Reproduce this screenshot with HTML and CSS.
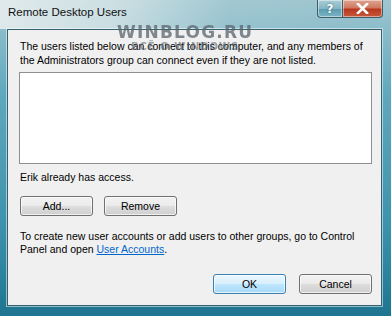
FILE: index.html
```html
<!DOCTYPE html>
<html lang="en">
<head>
    <meta charset="UTF-8">
    <title>Remote Desktop Users</title>
    <link rel="stylesheet" href="styles.css">
</head>
<body>

<div class="window">
    <div class="title-bar">
        <span class="title">Remote Desktop Users</span>
        <div class="caption-buttons">
            <button class="cap-btn help-btn">?</button>
            <button class="cap-btn close-btn">
                <svg width="13" height="11" viewBox="0 0 13 11">
                    <path d="M2 1 L11 10 M11 1 L2 10" stroke="#fff" stroke-width="2.6" stroke-linecap="square"/>
                </svg>
            </button>
        </div>
    </div>

    <div class="content">
        <p class="intro">The users listed below can connect to this computer, and any members of<br>the Administrators group can connect even if they are not listed.</p>

        <div class="user-list"></div>

        <p class="access-note">Erik already has access.</p>

        <div class="button-row">
            <button class="dlg-button">Add...</button>
            <button class="dlg-button">Remove</button>
        </div>

        <p class="hint">To create new user accounts or add users to other groups, go to Control<br>Panel and open <a href="#" class="link">User Accounts</a>.</p>

        <div class="footer">
            <button class="dlg-button default">OK</button>
            <button class="dlg-button">Cancel</button>
        </div>
    </div>

    <div class="watermark">
        <span class="wm-main">WINBLOG.RU</span>
        <span class="wm-sub">ВСЁ О WINDOWS</span>
    </div>
</div>

</body>
</html>
```

FILE: styles.css
```css
/* Global */
body {
    margin: 0;
    font-family: 'Liberation Sans', Arial, sans-serif;
    background-color: #1b6a80;
}

/* Window frame */
.window {
    position: relative;
    width: 391px;
    height: 316px;
    box-sizing: border-box;
    display: flex;
    flex-direction: column;
    padding: 0 9px 10px 7px;
    background: linear-gradient(180deg, #9fc6d0 0%, #5ea8bd 30%, #3f93ad 70%, #1f7590 100%);
    overflow: hidden;
}

.title-bar {
    height: 29px;
    display: flex;
    justify-content: space-between;
    align-items: flex-start;
    margin-right: -1px;
    background: linear-gradient(90deg, rgba(236, 240, 240, 0.85) 0%, rgba(220, 232, 234, 0.75) 30%, rgba(170, 205, 214, 0.3) 60%, rgba(120, 180, 196, 0) 100%);
    margin-left: -7px;
    padding-left: 8px;
}

.title {
    font-size: 11.5px;
    color: #111;
    margin-top: 6px;
}

.caption-buttons {
    display: flex;
}

.cap-btn {
    height: 18px;
    border: 1px solid #3f5e68;
    border-top: none;
    padding: 0;
    display: flex;
    align-items: center;
    justify-content: center;
    box-shadow: inset 0 0 0 1px rgba(255, 255, 255, 0.45);
}

.help-btn {
    width: 25px;
    border-radius: 0 0 0 4px;
    border-right: none;
    background: linear-gradient(180deg, #a9cdd7 0%, #86b6c4 50%, #5d9db0 55%, #7ab5c5 100%);
    color: #fff;
    font-family: 'DejaVu Sans', sans-serif;
    font-weight: bold;
    font-size: 12px;
    text-shadow: 0 0 2px #2a5663;
}

.close-btn {
    width: 41px;
    border-radius: 0 0 4px 0;
    background: linear-gradient(180deg, #e0a490 0%, #cf7a62 45%, #b8381e 55%, #c85a3c 100%);
}

/* Client area */
.content {
    flex: 1;
    background-color: #f0f0f0;
    border: 1px solid #35606e;
    box-shadow: 0 0 0 1px rgba(255, 255, 255, 0.5);
    display: flex;
    flex-direction: column;
    padding: 0 9px 11px 12px;
    font-size: 10.5px;
    color: #000;
}

.intro {
    margin: 9px 0 0;
    line-height: 14px;
    white-space: nowrap;
}

.user-list {
    height: 90px;
    margin: 5px 0 0 -1px;
    background-color: #fff;
    border: 1px solid #8e8f8f;
}

.access-note {
    margin: 6px 0 0;
    line-height: 14px;
}

.button-row {
    display: flex;
    gap: 11px;
    margin-top: 12px;
}

.dlg-button {
    width: 73px;
    height: 20px;
    padding: 0;
    border: 1px solid #707070;
    border-radius: 3px;
    background: linear-gradient(180deg, #f2f2f2 0%, #ebebeb 48%, #dddddd 52%, #cfcfcf 100%);
    box-shadow: inset 0 0 0 1px rgba(255, 255, 255, 0.7);
    font-family: 'Liberation Sans', Arial, sans-serif;
    font-size: 10.5px;
    color: #000;
}

.dlg-button.default {
    border-color: #3c7fb1;
    background: linear-gradient(180deg, #eaf6fd 0%, #d9f0fc 48%, #bee6fd 52%, #a7d9f5 100%);
}

.hint {
    margin: 14px 0 0;
    line-height: 13px;
    white-space: nowrap;
}

.link {
    color: #0066cc;
}

.footer {
    display: flex;
    justify-content: flex-end;
    gap: 13px;
    margin-top: auto;
}

/* Watermark over the dialog */
.watermark {
    position: absolute;
    left: 117px;
    top: 23px;
    display: flex;
    flex-direction: column;
    align-items: center;
    color: rgba(90, 100, 108, 0.75);
    font-family: 'DejaVu Sans', sans-serif;
    font-weight: bold;
    filter: blur(0.6px);
    pointer-events: none;
}

.wm-main {
    font-size: 17px;
    line-height: 18px;
    letter-spacing: 1.2px;
}

.wm-sub {
    font-size: 10px;
    line-height: 12px;
    letter-spacing: 1px;
    color: rgba(90, 100, 108, 0.6);
}
```
